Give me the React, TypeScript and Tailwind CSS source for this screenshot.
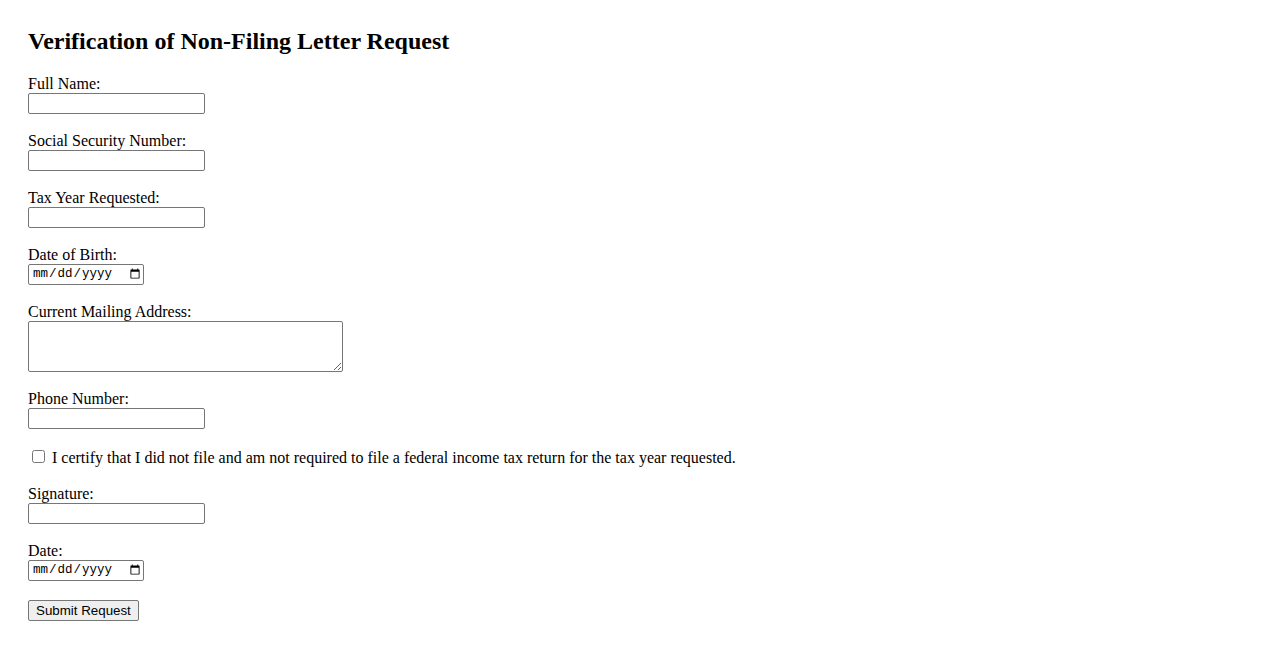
import { useState } from 'react';

const serif = { fontFamily: '"Liberation Serif", "Times New Roman", serif' };

const textInput =
  'block w-[177px] h-[21px] border border-[#767676] rounded-[2px] bg-white px-[2px] text-[13.33px] font-["Liberation_Sans",Arial,sans-serif]';

const dateInput =
  'block w-[116px] h-[21px] border border-[#767676] rounded-[2px] bg-white pl-[3px] pr-0 text-[12.5px] font-["Liberation_Mono","Courier_New",monospace]';

function Field({ label, children }: { label: string; children: React.ReactNode }) {
  return (
    <div className="flex flex-col items-start">
      <label className="block text-[16px] leading-[15px] mb-[2px]">{label}</label>
      {children}
    </div>
  );
}

export default function App() {
  const [certified, setCertified] = useState(false);

  return (
    <div className="min-h-screen bg-white text-black px-[28px] pt-[27px]" style={serif}>
      <h2 className="text-[24px] leading-[28px] font-bold">Verification of Non-Filing Letter Request</h2>

      <form className="mt-[21px] flex flex-col gap-[19px]" onSubmit={(e) => e.preventDefault()}>
        <Field label="Full Name:">
          <input type="text" className={textInput} />
        </Field>
        <Field label="Social Security Number:">
          <input type="text" className={textInput} />
        </Field>
        <Field label="Tax Year Requested:">
          <input type="text" className={textInput} />
        </Field>
        <Field label="Date of Birth:">
          <input type="date" className={dateInput} />
        </Field>
        <Field label="Current Mailing Address:">
          <textarea className="block w-[315px] h-[51px] border border-[#767676] rounded-[2px] bg-white px-[2px] text-[13.33px] font-['Liberation_Mono',monospace]" />
        </Field>
        <Field label="Phone Number:">
          <input type="tel" className={textInput} />
        </Field>

        <div className="flex items-start h-[17px] mt-[2px]">
          <input
            type="checkbox"
            checked={certified}
            onChange={(e) => setCertified(e.target.checked)}
            className="ml-[4px] mr-[7px] w-[13px] h-[13px]"
          />
          <span className="text-[16px] leading-[15px]">
            I certify that I did not file and am not required to file a federal income tax return for the tax year requested.
          </span>
        </div>

        <Field label="Signature:">
          <input type="text" className={textInput} />
        </Field>
        <Field label="Date:">
          <input type="date" className={dateInput} />
        </Field>

        <div className="flex">
          <button
            type="submit"
            className="h-[21px] px-[7px] border border-[#767676] rounded-[2px] bg-[#efefef] text-[13.33px] leading-[17px] font-['Liberation_Sans',Arial,sans-serif]"
          >
            Submit Request
          </button>
        </div>
      </form>
    </div>
  );
}
